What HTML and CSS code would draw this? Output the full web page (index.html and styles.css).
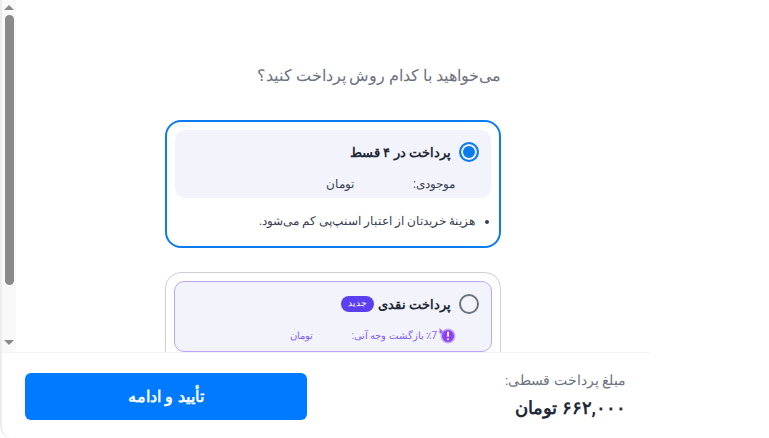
FILE: index.html
```html
<!DOCTYPE html>
<html lang="fa" dir="rtl">
<head>
    <meta charset="UTF-8">
    <title>روش پرداخت</title>
    <link rel="stylesheet" href="styles.css">
</head>
<body>
    <div class="sheet">
        <div class="scroll-area">
            <div class="track">
                <span class="arrow arrow-up"></span>
                <span class="thumb"></span>
                <span class="arrow arrow-down"></span>
            </div>
            <div class="content">
                <h2 class="question">می‌خواهید با کدام روش پرداخت کنید؟</h2>

                <div class="option option-active">
                    <div class="option-box">
                        <div class="option-head">
                            <span class="radio radio-on"></span>
                            <span class="option-title">پرداخت در ۴ قسط</span>
                        </div>
                        <div class="option-row">
                            <span class="row-label">موجودی:</span>
                            <span class="row-value">تومان</span>
                        </div>
                    </div>
                    <ul class="notes">
                        <li>هزینهٔ خریدتان از اعتبار اسنپ‌پی کم می‌شود.</li>
                    </ul>
                </div>

                <div class="option option-cash">
                    <div class="option-box box-purple">
                        <div class="option-head">
                            <span class="radio"></span>
                            <span class="option-title">پرداخت نقدی</span>
                            <span class="badge">جدید</span>
                        </div>
                        <div class="option-row row-purple">
                            <svg class="cashback-icon" width="17" height="17" viewBox="0 0 17 17">
                                <circle cx="9" cy="9" r="6.7" fill="#8b3ff0" stroke="#c4a6fa" stroke-width="1.6"/>
                                <path d="M.5 1v5.5H6z" fill="#9a6cf6"/>
                                <rect x="8.2" y="4.6" width="1.7" height="5.4" rx=".8" fill="#fff"/>
                                <circle cx="9" cy="12.2" r="1" fill="#fff"/>
                            </svg>
                            <span class="row-label">٪7 بازگشت وجه آنی:</span>
                            <span class="row-value">تومان</span>
                        </div>
                    </div>
                </div>
            </div>
        </div>

        <div class="footer">
            <div class="price">
                <div class="price-label">مبلغ پرداخت قسطی:</div>
                <div class="price-value">۶۶۲,۰۰۰ تومان</div>
            </div>
            <button class="confirm" type="button">تأیید و ادامه</button>
        </div>
    </div>
</body>
</html>
```

FILE: styles.css
```css
* {
    margin: 0;
    padding: 0;
    box-sizing: border-box;
    font-family: Roboto, "Noto Sans", "Liberation Sans", sans-serif;
}

html, body {
    height: 100%;
    overflow: hidden;
    background: #fff;
}

.sheet {
    width: 650px;
    height: 438px;
    margin-right: auto;
    display: flex;
    flex-direction: column;
    direction: ltr;
    border-left: 2px solid #ececec;
    border-bottom-left-radius: 12px;
    background: #fff;
}

.scroll-area {
    flex: none;
    height: 352px;
    display: flex;
    overflow: hidden;
}

.track {
    flex: none;
    width: 14px;
    height: 352px;
    display: flex;
    flex-direction: column;
    align-items: center;
    background: #f9f9f9;
}

.arrow {
    width: 0;
    height: 0;
    border-left: 5px solid transparent;
    border-right: 5px solid transparent;
}

.arrow-up {
    margin-top: 5px;
    border-bottom: 5px solid #8a8a8a;
}

.arrow-down {
    margin-top: 55px;
    border-top: 5px solid #8a8a8a;
}

.thumb {
    flex: none;
    width: 9px;
    height: 270px;
    margin-top: 5px;
    border-radius: 5px;
    background: #8a8a8a;
}

.content {
    flex: 1;
    direction: rtl;
    padding: 64px 149px 0 0;
}

.question {
    width: 336px;
    font-size: 15.6px;
    line-height: 24px;
    font-weight: 400;
    color: #6b7280;
    margin-bottom: 32px;
}

.option {
    width: 336px;
    background: #fff;
}

.option-active {
    height: 128px;
    padding: 8px;
    border: 2px solid #0a7cf0;
    border-radius: 16px;
}

.option-cash {
    height: 100px;
    margin-top: 24px;
    padding: 8px;
    border: 1px solid #cfcfd6;
    border-radius: 16px;
}

.option-box {
    height: 68px;
    padding: 12px 12px 0 12px;
    border-radius: 10px;
    background: #f3f4fb;
}

.box-purple {
    height: 71px;
    padding-top: 12px;
    border: 1px solid #b9a6fb;
}

.option-head {
    display: flex;
    align-items: center;
    gap: 8px;
}

.radio {
    flex: none;
    width: 20px;
    height: 20px;
    border: 2px solid #6b7280;
    border-radius: 50%;
}

.radio-on {
    border-color: #0a7cf0;
    background: #0a7cf0;
    box-shadow: inset 0 0 0 2px #f3f4fb;
}

.option-title {
    font-size: 13.4px;
    font-weight: 700;
    color: #1f2937;
}

.badge {
    height: 16px;
    margin-right: -4px;
    padding: 0 7px;
    line-height: 15px;
    border-radius: 8px;
    font-size: 9px;
    color: #fff;
    background: #5b3ff0;
}

.option-row {
    display: flex;
    align-items: center;
    margin-top: 15px;
    padding-right: 24px;
    font-size: 12px;
    color: #374151;
}

.row-label {
    width: 101px;
}

.row-purple {
    margin-top: 13px;
    padding-right: 23px;
    font-size: 10px;
    color: #7c5cfa;
}

.row-purple .row-label {
    width: 124px;
    margin-right: 2px;
}

.notes {
    padding: 16px 16px 0 0;
    font-size: 12px;
    color: #374151;
}

.footer {
    flex: 1;
    display: flex;
    align-items: center;
    justify-content: space-between;
    direction: rtl;
    padding: 1px 24px 0 23px;
    border-top: 1px solid #f3f3f3;
}

.price {
    margin-bottom: 4px;
    color: #6b7280;
}

.price-label {
    font-size: 13.6px;
    line-height: 20px;
}

.price-value {
    margin-top: 8px;
    font-size: 18px;
    line-height: 20px;
    font-weight: 700;
    color: #1f2937;
}

.confirm {
    flex: none;
    width: 282px;
    height: 47px;
    border: none;
    border-radius: 6px;
    background: #007bff;
    color: #fff;
    font-size: 16.3px;
    font-weight: 700;
}
```
